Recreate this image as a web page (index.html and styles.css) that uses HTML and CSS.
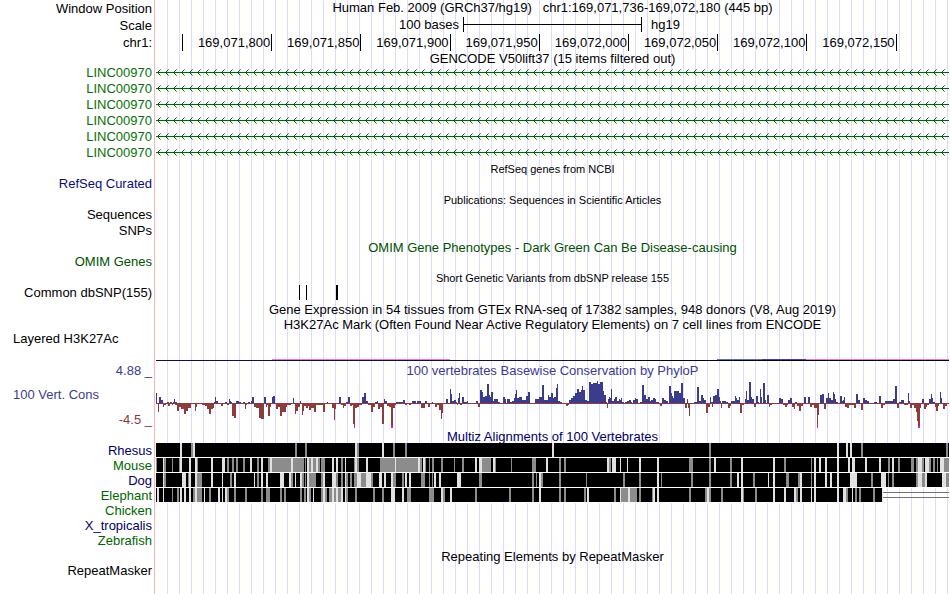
FILE: index.html
```html
<!DOCTYPE html>
<html lang="en">

<head>
    <meta charset="UTF-8">
    <title>chr1:169,071,736-169,072,180 - Human hg19</title>
    <link rel="stylesheet" href="styles.css">
</head>

<body>

    <main class="browser">
        <div class="track row-16">
            <div class="label low">Window Position</div>
            <div class="title">Human Feb. 2009 (GRCh37/hg19)   chr1:169,071,736-169,072,180 (445 bp)</div>
        </div>
        <div class="track row-17">
            <div class="label low">Scale</div>
            <div class="scale">
                <span class="scale-size">100 bases</span>
                <span class="scale-bar"></span>
                <span class="scale-db">hg19</span>
            </div>
        </div>
        <div class="track row-18">
            <div class="label low">chr1:</div>
            <div class="ruler">
                <span></span>
                <span>169,071,800</span>
                <span>169,071,850</span>
                <span>169,071,900</span>
                <span>169,071,950</span>
                <span>169,072,000</span>
                <span>169,072,050</span>
                <span>169,072,100</span>
                <span>169,072,150</span>
            </div>
        </div>

        <!-- genes -->
        <div class="track row-14">
            <div class="title low">GENCODE V50lift37 (15 items filtered out)</div>
        </div>
        <div id="genes"></div>
        <div class="track row-16">
            <div class="title small">RefSeq genes from NCBI</div>
        </div>
        <div class="track row-14">
            <div class="label refseq">RefSeq Curated</div>
        </div>
        <div class="track row-16">
            <div class="title small low">Publications: Sequences in Scientific Articles</div>
        </div>
        <div class="track row-16">
            <div class="label">Sequences</div>
        </div>
        <div class="track row-16">
            <div class="label">SNPs</div>
        </div>
        <div class="track row-16">
            <div class="title omim low">OMIM Gene Phenotypes - Dark Green Can Be Disease-causing</div>
        </div>
        <div class="track row-14">
            <div class="label omim">OMIM Genes</div>
        </div>

        <!-- variation -->
        <div class="track row-16">
            <div class="title small low">Short Genetic Variants from dbSNP release 155</div>
        </div>
        <div class="track row-16">
            <div class="label">Common dbSNP(155)</div>
            <svg class="plot" viewBox="0 0 793 16" preserveAspectRatio="none">
                <path d="M143 0h1v15h-1zM150 0h1v15h-1zM180 0h2v15h-2z" />
            </svg>
        </div>

        <!-- expression and regulation -->
        <div class="track row-16">
            <div class="title low">Gene Expression in 54 tissues from GTEx RNA-seq of 17382 samples, 948 donors (V8, Aug 2019)</div>
        </div>
        <div class="track row-14">
            <div class="title low">H3K27Ac Mark (Often Found Near Active Regulatory Elements) on 7 cell lines from ENCODE</div>
        </div>
        <div class="track row-32">
            <div class="label label-left low">Layered H3K27Ac</div>
            <svg class="plot" viewBox="0 0 793 32" preserveAspectRatio="none">
                <path fill="#f078c8" d="M116 28h178v1h-178zM650 28h143v1h-143z" />
                <path fill="#6070b8" d="M561 28h45v1h-45z" />
                <path fill="#503c96" d="M606 28h44v1h-44z" />
                <path fill="#140a46" d="M0 29h430v1h-430z" />
                <path fill="#0a0014" d="M430 29h363v1h-363z" />
            </svg>
        </div>

        <!-- conservation -->
        <div class="track row-15 cons">
            <div class="label">4.88 _</div>
            <div class="title">100 vertebrates Basewise Conservation by PhyloP</div>
        </div>
        <div class="track row-51">
            <div class="cons-labels">
                <div class="cons">100 Vert. Cons</div>
                <div class="cons-min">-4.5 _</div>
            </div>
            <svg class="plot" id="phylop" viewBox="0 0 793 51" preserveAspectRatio="none"></svg>
        </div>
        <div class="track row-14">
            <div class="title navy low">Multiz Alignments of 100 Vertebrates</div>
        </div>
        <div id="species"></div>
        <div class="track row-16">
            <div class="title low">Repeating Elements by RepeatMasker</div>
        </div>
        <div class="track row-14">
            <div class="label">RepeatMasker</div>
        </div>
    </main>

    <!-- arrow pattern shared by all the gene rows -->
    <svg class="defs" aria-hidden="true">
        <defs>
            <pattern id="arrows" width="8" height="16" patternUnits="userSpaceOnUse">
                <path fill="#006400" d="M0 7h8v1h-8zM2 6h1v3h-1zM3 5h1v1h-1zM3 9h1v1h-1z" />
                <path fill="#006400" fill-opacity="0.6" d="M4 4h1v1h-1zM4 10h1v1h-1z" />
            </pattern>
        </defs>
    </svg>

    <script src="script.js"></script>
</body>

</html>
```
FILE: styles.css
```css
body {
    margin: 0;
    font-family: "Liberation Sans", Arial, Helvetica, sans-serif;
    font-size: 13px;
    color: #000;
    background: #fff;
}

/* red divider after the labels, then a guide line every 12px */
.browser {
    box-sizing: border-box;
    min-height: 100vh;
    padding-right: 1px;
    overflow: hidden;
    background:
        linear-gradient(to right, #fff 0 154px, #ffb4b4 154px 155px, #fff 155px 156px, transparent 156px),
        repeating-linear-gradient(to right, transparent 0 11px, #dcdcff 11px 12px);
}

.track {
    display: grid;
    grid-template-columns: 152px minmax(0, 1fr);
    column-gap: 4px;
    white-space: pre;
}

.row-14 {
    height: 14px;
    line-height: 14px;
}

.row-15 {
    height: 15px;
    line-height: 15px;
}

.row-16 {
    height: 16px;
    line-height: 16px;
}

.row-17 {
    height: 17px;
    line-height: 17px;
}

.row-18 {
    height: 18px;
    line-height: 18px;
}

.row-32 {
    height: 32px;
    line-height: 14px;
}

.row-51 {
    height: 51px;
    line-height: 16px;
}

.label {
    grid-column: 1;
    text-align: right;
}

.label-left {
    padding-left: 13px;
    text-align: left;
}

.title {
    grid-column: 2;
    text-align: center;
}

.low {
    padding-top: 1px;
}

.small {
    font-size: 11px;
}

.plot {
    grid-column: 2;
    display: block;
    width: 100%;
    height: 100%;
    shape-rendering: crispEdges;
}

.scale {
    display: grid;
    grid-template-columns: 307fr 179fr 307fr;
    line-height: 17px;
}

.scale-size {
    padding-right: 4px;
    text-align: right;
}

.scale-bar {
    height: 15px;
    margin-top: 1px;
    box-sizing: border-box;
    border: solid #000;
    border-width: 0 1px;
    background: linear-gradient(#000, #000) center / 100% 1px no-repeat;
}

.scale-db {
    padding-left: 9px;
}

.ruler {
    display: grid;
    grid-template-columns: 270fr repeat(8, 892fr) 524fr;
    height: 15px;
    margin-top: 1px;
    line-height: 17px;
}

/* the first tick stands alone, without a position */
.ruler span {
    padding-right: 1px;
    border-right: 1px solid #000;
    text-align: right;
}

.gene {
    color: #067206;
}

.refseq {
    color: #0c0c78;
}

.omim {
    color: #005000;
}

.navy {
    color: #000064;
}

.green {
    color: #006400;
}

.cons {
    color: #3c3c8c;
}

.cons-labels {
    display: flex;
    flex-direction: column;
    justify-content: space-between;
    padding: 9px 0 1px;
}

.cons-labels .cons {
    padding-left: 13px;
}

.cons-min {
    color: #8c3c3c;
    text-align: right;
}

.defs {
    position: absolute;
    width: 0;
    height: 0;
}
```
FILE: script.js
```js
const UP = '#3c3c8c';
const DOWN = '#8c3c3c';
const CLIPPED = '#ff00ff';
const ZERO = 25;

// phyloP bars: x,width,height (negative = fast evolving)
const phylop = `
0,1,10 3,2,6 5,2,3 11,2,1 14,2,1 17,1,1 18,1,4 19,2,1
2,1,-9 7,1,-4 8,2,-2 12,2,-3 16,1,-2 19,2,-2 21,2,-8 23,2,-4 25,3,-6 28,2,-11 30,2,-8 32,3,-5
39,1,-8 40,1,-4 46,3,-2 49,2,-3 51,2,-6 53,2,-11 55,2,-6 57,1,-5
58,1,1 59,1,6 60,2,2 65,2,-3 69,2,1 71,2,-2 73,1,4 74,1,2 75,1,1 76,2,-13 78,2,-15
80,3,2 83,2,1 87,2,1 89,1,-6 90,1,-2 92,2,1 95,1,2 96,2,6
98,2,-4 100,3,-5 103,2,-15 105,3,-16 108,2,6 110,1,-4 111,1,-2 112,2,-13 114,1,-4 116,1,6 117,2,7
120,2,-6 122,2,-4 124,2,-13 126,2,-9 128,2,-9 130,1,-4 131,4,-2
137,1,5 139,1,-11 140,2,-8 142,2,-4 144,1,2 146,1,-12 147,1,-8 148,2,-3 150,2,-5 152,1,-3 153,2,-7 155,3,-5 158,2,-9
160,7,-2 167,2,-9 171,1,1 176,2,-5 178,1,-17 179,1,-6 183,2,6 185,2,-2 187,1,-5 188,2,-3 190,2,1 192,2,6
194,2,-3 196,1,-2 197,1,-21 198,1,-25 199,2,-5 201,2,-4 203,3,-2 206,2,6 208,2,10 210,2,2
212,3,-2 215,2,-9 217,2,-4 219,2,1 221,1,2 222,2,-6 224,2,-4 226,2,-21 228,1,4 229,2,2
231,2,-3 233,2,-4 235,2,-25 237,2,-5 239,1,-2 240,7,1 247,2,3 249,2,-2 253,2,-2
256,4,2 261,4,2 265,4,-5 269,2,2 272,2,-4 276,1,1 279,2,-4 281,2,-2 283,2,-7 285,1,-16 286,1,-10
290,2,4 294,1,14 295,1,9 296,2,2 298,2,3 300,1,1 301,1,-2 302,1,5 303,1,10 304,2,-2 306,2,6 308,3,1 311,1,2
320,2,2 322,2,-4 324,2,13 326,1,11 327,2,6 329,2,7 331,2,19 333,1,8 334,1,6 335,2,11 337,1,2 338,4,4 342,2,1
347,2,6 349,1,4 351,3,4 354,2,1 356,2,2 358,1,5 359,1,9 360,1,13 361,2,5 363,3,6 366,4,3 370,2,7 372,2,11
379,4,4 383,3,6 386,2,18 388,4,3 392,1,8 393,2,6 395,2,10 397,1,5 398,2,6 400,1,15 401,1,19 402,2,2 404,2,1
410,2,-3 412,1,-2 413,2,3 415,2,5 417,2,7 419,2,10 421,2,14 423,2,11 425,1,13 426,1,17 427,2,13 429,2,3 431,2,2
433,2,21 435,2,19 437,2,20 439,2,20 441,1,22 442,2,19 444,3,21 447,1,12 448,2,8 450,1,1 451,1,-5
452,1,4 453,1,6 454,1,5 455,1,14 456,2,2 458,1,4 459,2,6 461,2,2 463,1,4 464,1,3 465,1,5 466,2,1
469,2,1 471,2,2 473,2,3 475,1,1 477,2,3 479,1,5 480,2,4 484,2,1 486,2,18 488,2,8 490,2,4 492,2,6 494,1,2 495,2,3
497,2,5 499,1,4 500,3,1 504,2,-3 506,2,5 508,2,3 510,2,2 513,2,17 515,1,10 516,1,7 517,1,5 518,5,12 523,2,10
525,2,20 527,2,5 529,2,-5 531,1,4 532,1,-5 533,1,-13 538,3,1 541,2,16 543,2,2 545,2,8 547,1,5 548,2,3
550,2,-10 552,2,-4 554,1,6 555,2,1 556,1,-4 557,2,7 559,2,8 561,2,14 563,1,6 564,1,2 565,1,-5 566,4,2 570,2,1
572,2,-5 574,1,-3 575,4,2 579,1,7 580,1,5 581,2,3 583,1,6 584,2,-10 586,2,-2 589,1,4 590,1,12 591,2,3
593,2,21 595,1,6 596,2,4 598,2,-4 600,2,7 602,1,1 604,1,14 605,1,6 607,2,20 609,1,3 611,2,8 613,1,-4 614,2,-2
623,2,5 625,2,4 627,2,-2 629,2,-4 631,1,-2 632,2,3 634,2,5 636,2,-4 638,1,-6 639,2,1 641,2,-3 643,2,-8 645,2,-3
648,2,6 652,2,6 654,2,-4 656,2,-2 658,3,-5 661,1,-25 662,1,-12 664,2,8 666,2,9 668,2,-6 670,2,5 672,1,10 673,2,5
675,2,3 677,1,11 678,1,9 679,1,4 680,2,1 684,2,7 686,1,2 687,1,3 688,1,6 689,2,-4 691,2,-5 693,5,-2 698,2,-5
700,2,9 702,2,3 705,2,-7 707,2,5 709,2,3 711,2,2 718,3,1 723,2,7 725,2,-5 727,2,-2 729,5,2 734,3,2
737,2,4 739,2,17 741,2,-5 743,2,1 745,3,3 748,4,-2 752,1,10 753,1,2 754,2,-5 756,2,-2 758,2,-5 760,1,-9 761,1,-18
762,2,-25 764,1,-5 766,2,4 768,2,-6 770,1,-4 771,2,-2 773,2,4 775,1,9 776,1,5 777,2,1 779,1,-4 780,2,-8 782,1,-3
784,1,11 785,1,5 787,2,-6 789,2,-3`;

// alignment rows: x,width of the grey (g) and light (l) columns
const species = [
    {
        name: 'Rhesus',
        color: 'navy',
        end: 793,
        g: '35,2 139,2 149,2 201,2 237,2 249,2 553,2 705,2 790,2',
        l: '24,2 37,2 199,2 226,2 396,2 681,2 690,2 694,2'
    },
    {
        name: 'Mouse',
        color: 'green',
        end: 793,
        g: '0,1 8,2 16,1 23,1 41,1 71,2 76,2 80,2 87,2 101,2 112,2 116,19 137,11 149,1 153,2 157,3 162,2 165,4 185,2 198,1 201,2 224,15 240,22 264,2 269,1 273,1 276,2 285,2 298,1 306,2 326,9 339,1 355,1 376,4 403,2 408,2 453,2 533,4 553,2 574,2 628,2 655,1 732,2 742,2 755,3 760,2 766,2 773,2 777,2 781,1 788,5',
        l: '7,1 24,2 33,2 39,2 55,2 66,3 94,2 105,2 114,2 135,2 151,2 155,2 160,2 176,2 180,2 189,1 199,2 210,2 239,1 262,2 267,2 319,2 323,3 337,2 390,2 451,2 456,4 464,1 471,1 483,2 501,2 558,2 585,2 617,2 658,2 663,2 669,2 681,2 692,2 696,3 709,2 723,2 736,2 762,4 769,4 784,4'
    },
    {
        name: 'Dog',
        color: 'navy',
        end: 793,
        g: '8,2 32,1 41,5 74,2 101,2 135,2 146,2 149,1 153,7 165,2 180,2 185,2 190,2 194,2 198,3 205,5 215,2 237,3 246,2 265,4 273,1 276,1 323,3 376,2 380,1 385,2 403,2 430,1 467,2 483,2 505,1 535,2 553,2 574,2 597,2 630,3 642,2 655,1 715,2 732,1 736,2 760,2 766,3 790,3',
        l: '7,1 26,4 33,2 39,2 55,2 66,1 78,2 98,1 105,2 110,2 124,4 133,2 139,1 144,2 151,2 167,2 176,4 189,1 201,4 210,5 223,3 228,2 235,2 249,2 253,2 278,2 283,2 301,4 383,2 501,2 581,2 585,2 612,1 617,2 644,2 658,2 669,2 674,2 681,2 694,7 725,5 762,4 769,2 786,4'
    },
    {
        name: 'Elephant',
        color: 'green',
        end: 726,
        g: '16,1 21,2 37,2 41,5 53,2 71,2 78,2 89,2 105,2 110,4 124,2 128,2 144,2 148,2 153,2 165,2 169,2 173,3 178,2 182,3 190,2 199,2 217,2 226,2 251,4 273,5 287,2 319,2 353,2 376,2 403,2 408,2 428,2 458,2 465,7 474,7 483,2 496,1 533,2 549,2 553,2 565,2 587,1 599,2 640,2 690,2 699,2 703,2 717,2',
        l: '1,2 7,1 24,2 28,2 33,2 39,2 48,1 62,2 66,1 69,2 151,2 157,1 167,2 176,2 180,2 185,2 189,1 235,4 246,2 285,2 294,2 383,2 431,2 464,1 472,2 497,2 501,2 551,2 585,2 617,2 628,2 638,2 644,2 655,1 658,2 681,2 687,3 696,1 726,1'
    },
    { name: 'Chicken', color: 'green' },
    { name: 'X_tropicalis', color: 'navy' },
    { name: 'Zebrafish', color: 'green' }
];

function rect(x, y, w, h, fill) {
    return `<rect x="${x}" y="${y}" width="${w}" height="${h}" fill="${fill}"/>`;
}

function columns(list, fill) {
    return list.split(' ').map(item => {
        const [x, w] = item.split(',');
        return rect(x, 0, w, 14, fill);
    }).join('');
}

function drawGenes() {
    let html = '';
    for (let i = 0; i < 6; i++) {
        html += `<div class="track row-16">
            <div class="label gene">LINC00970</div>
            <svg class="plot"><rect width="100%" height="16" fill="url(#arrows)"/></svg>
        </div>`;
    }
    document.getElementById('genes').innerHTML = html;
}

function drawPhylop() {
    let bars = rect(0, ZERO, 793, 1, DOWN);
    phylop.trim().split(/\s+/).forEach(item => {
        const [x, w, h] = item.split(',').map(Number);
        if (h > 0) {
            bars += rect(x, ZERO - h, w, h, UP);
        } else {
            bars += rect(x, ZERO, w, -h, DOWN);
        }
        if (h <= -25) {
            bars += rect(x, ZERO - h - 2, w, 2, CLIPPED);
        }
    });
    document.getElementById('phylop').innerHTML = bars;
}

function drawSpecies() {
    let html = '';
    species.forEach(row => {
        let bars = '';
        if (row.end) {
            bars += rect(0, 0, row.end, 15, '#fff');
            bars += rect(0, 0, row.end, 14, '#000');
            bars += columns(row.g, '#8c8c8c');
            bars += columns(row.l, '#e1e1e1');
            // no aligning bases: double line up to the edge
            if (row.end < 793) {
                bars += rect(row.end + 1, 4, 792 - row.end, 1, '#787078');
                bars += rect(row.end + 1, 9, 792 - row.end, 1, '#787078');
            }
        }
        html += `<div class="track row-15">
            <div class="label ${row.color}">${row.name}</div>
            <svg class="plot" viewBox="0 0 793 15" preserveAspectRatio="none">${bars}</svg>
        </div>`;
    });
    document.getElementById('species').innerHTML = html;
}

drawGenes();
drawPhylop();
drawSpecies();
```
